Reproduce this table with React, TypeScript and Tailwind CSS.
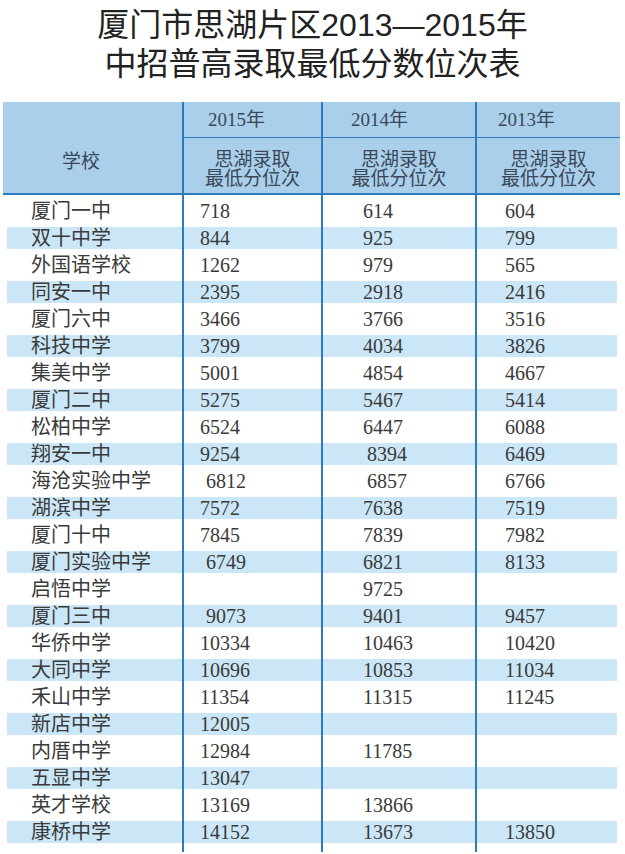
const rows: [string, string, string, string][] = [
  ["厦门一中", "718", "614", "604"],
  ["双十中学", "844", "925", "799"],
  ["外国语学校", "1262", "979", "565"],
  ["同安一中", "2395", "2918", "2416"],
  ["厦门六中", "3466", "3766", "3516"],
  ["科技中学", "3799", "4034", "3826"],
  ["集美中学", "5001", "4854", "4667"],
  ["厦门二中", "5275", "5467", "5414"],
  ["松柏中学", "6524", "6447", "6088"],
  ["翔安一中", "9254", "8394", "6469"],
  ["海沧实验中学", "6812", "6857", "6766"],
  ["湖滨中学", "7572", "7638", "7519"],
  ["厦门十中", "7845", "7839", "7982"],
  ["厦门实验中学", "6749", "6821", "8133"],
  ["启悟中学", "", "9725", ""],
  ["厦门三中", "9073", "9401", "9457"],
  ["华侨中学", "10334", "10463", "10420"],
  ["大同中学", "10696", "10853", "11034"],
  ["禾山中学", "11354", "11315", "11245"],
  ["新店中学", "12005", "", ""],
  ["内厝中学", "12984", "11785", ""],
  ["五显中学", "13047", "", ""],
  ["英才学校", "13169", "13866", ""],
  ["康桥中学", "14152", "13673", "13850"],
];

// a few numbers in the print are nudged right of their column
const nudged1 = ["6812", "6749", "9073"];
const nudged2 = ["8394", "6857"];

const line = "border-l-2 border-[#2c7bbf]";

export default function App() {
  return (
    <div className="w-[625px] h-[854px] bg-white overflow-hidden text-[#3a3a3a]">
      <div
        className="pt-[6px] text-center text-[32px] leading-[39px] text-[#222]"
        style={{ fontFamily: '"Liberation Sans", "Noto Sans CJK SC", sans-serif' }}
      >
        <div>厦门市思湖片区2013—2015年</div>
        <div>中招普高录取最低分数位次表</div>
      </div>

      <div
        className="ml-[3px] mt-[18px] w-[617px]"
        style={{ fontFamily: '"Liberation Serif", "Noto Sans CJK SC", serif' }}
      >
        {/* header */}
        <div className="grid grid-cols-[179px_139px_154px_145px] grid-rows-[36px_55px] bg-[#a9cfeb] border-b-2 border-[#2c7bbf] text-[#3c4858]">
          <div className="row-span-2 pl-[59px] pt-[50px] text-[19px] leading-[20px]">学校</div>
          <div className={`${line} border-b-[1.5px] pl-[24px] text-[19px] leading-[36px]`}>2015年</div>
          <div className={`${line} border-b-[1.5px] pl-[28px] text-[19px] leading-[36px]`}>2014年</div>
          <div className={`${line} border-b-[1.5px] pl-[21px] text-[19px] leading-[36px]`}>2013年</div>
          {[0, 1, 2].map((i) => (
            <div key={i} className={`${line} pt-[12px] text-center text-[19px] leading-[19px]`}>
              <div>思湖录取</div>
              <div>最低分位次</div>
            </div>
          ))}
        </div>

        {/* body */}
        {rows.map((r, i) => (
          <div
            key={r[0]}
            className={`ml-[4px] w-[610px] grid grid-cols-[175px_139px_154px_142px] text-[20px] ${
              i % 2 === 0 ? "h-[32px] leading-[32px]" : "h-[22px] leading-[22px] bg-[#cbe7f7]"
            }`}
          >
            <div className="pl-[24px] whitespace-nowrap">{r[0]}</div>
            <div className={`${line} ${nudged1.includes(r[1]) ? "pl-[22px]" : "pl-[16px]"}`}>{r[1]}</div>
            <div className={`${line} ${nudged2.includes(r[2]) ? "pl-[44px]" : "pl-[40px]"}`}>{r[2]}</div>
            <div className={`${line} pl-[28px]`}>{r[3]}</div>
          </div>
        ))}
        <div className="ml-[4px] w-[610px] h-[9px] grid grid-cols-[175px_139px_154px_142px]">
          <div />
          <div className={line} />
          <div className={line} />
          <div className={line} />
        </div>
      </div>
    </div>
  );
}
